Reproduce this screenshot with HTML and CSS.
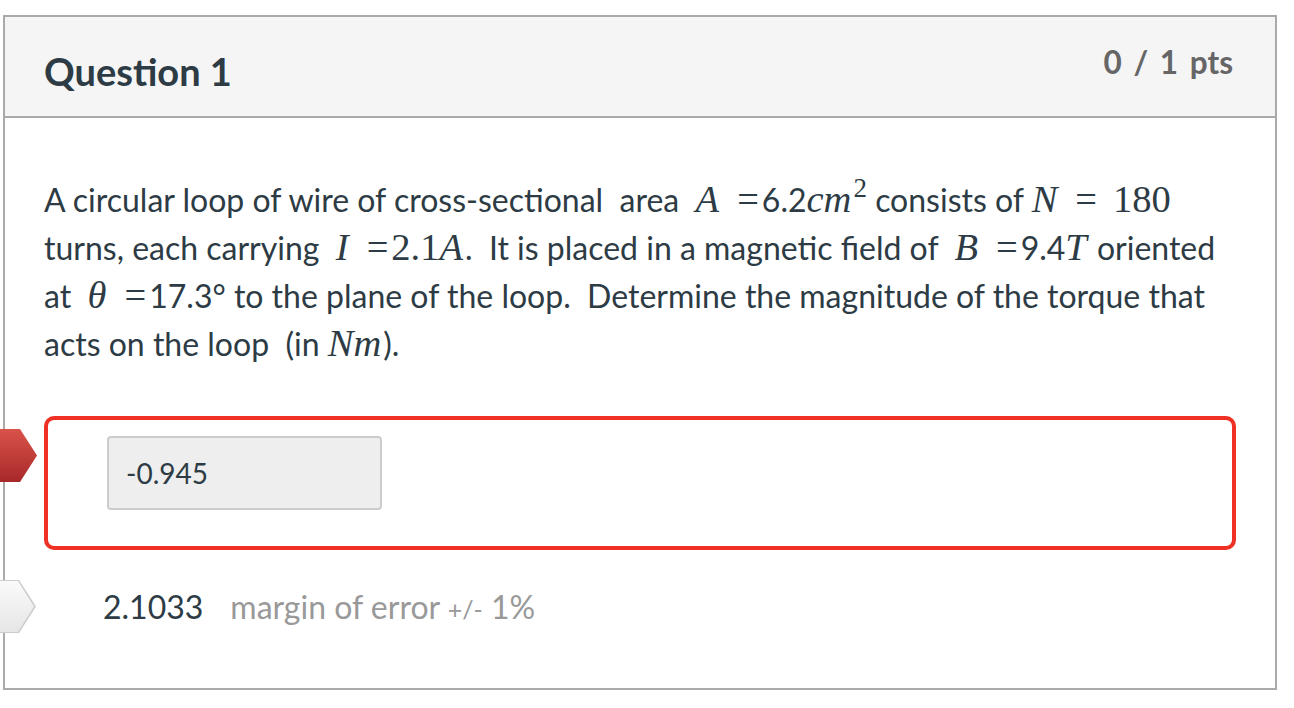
FILE: index.html
```html
<!DOCTYPE html>
<html>
<head>
<meta charset="utf-8">
<link rel="stylesheet" href="styles.css">
</head>
<body>
<div class="question">
  <div class="q-header">
    <h2 class="q-title">Question 1</h2>
    <div class="q-pts">0 / 1 pts</div>
  </div>
  <div class="q-body">
    <p class="q-text">A circular loop of wire of cross-sectional&nbsp; area&nbsp; <span class="mi">A</span><span class="mo">=</span>6.2<span class="mi">cm</span><sup class="sup">2</sup> consists of <span class="mi">N</span><span class="mo both">=</span><span class="mn">180</span> turns, each carrying&nbsp; <span class="mi">I</span><span class="mo">=</span><span class="mn">2.1</span><span class="mi">A</span>.&nbsp; It is placed in a magnetic field of&nbsp; <span class="mi">B</span><span class="mo">=</span>9.4<span class="mi">T</span> oriented at&nbsp; <span class="mi">θ</span><span class="mo">=</span>17.3° to the plane of the loop.&nbsp; Determine the magnitude of the torque that acts on the loop&nbsp; (in <span class="mi">Nm</span>).</p>
    <div class="answers">
      <div class="answer wrong">
        <span class="marker marker-red"></span>
        <div class="answer-box">
          <div class="answer-input">-0.945</div>
        </div>
      </div>
      <div class="answer correct">
        <span class="marker marker-gray"></span>
        <div class="correct-line"><span class="correct-val">2.1033</span><span class="margin">margin of error <span class="pm">+/-</span> 1%</span></div>
      </div>
    </div>
  </div>
</div>
</body>
</html>
```
FILE: styles.css
```css
html, body {
  margin: 0;
  padding: 0;
  background: #ffffff;
}
body {
  font-family: Lato, "Open Sans", sans-serif;
  color: #2d3b45;
  padding: 15px 0 0 3px;
  width: 1274px;
}
.question {
  border: 2px solid #aaaaaa;
  height: 675px;
  box-sizing: border-box;
  position: relative;
}
.q-header {
  background: #f5f5f5;
  border-bottom: 2px solid #aaaaaa;
  height: 101px;
  box-sizing: border-box;
  display: flex;
  justify-content: space-between;
  padding: 0 42px 0 39px;
}
.q-title {
  margin: 0;
  font-weight: 700;
  font-size: 38px;
  line-height: 38px;
  padding-top: 35px;
  color: #2d3b45;
}
.q-pts {
  font-weight: 700;
  font-size: 31.5px;
  line-height: 30px;
  padding-top: 30px;
  color: #666666;
  word-spacing: 4px;
}
.q-body {
  padding: 58px 39px 0 39px;
}
.q-text {
  margin: 0;
  font-size: 32px;
  line-height: 48px;
}
.mi {
  font-family: "Liberation Serif", "DejaVu Serif", serif;
  font-style: italic;
  font-size: 38.5px;
  line-height: 1;
  padding-right: 2px;
}
.mo, .mn {
  font-family: "Liberation Serif", "DejaVu Serif", serif;
  font-size: 38.5px;
  line-height: 1;
}
.mo {
  margin: 0 3px 0 16px;
}
.mo.both {
  margin-right: 16px;
}
.sup {
  font-family: "Liberation Serif", serif;
  font-size: 27px;
  line-height: 0;
  vertical-align: 15px;
}
.answers {
  padding-top: 48px;
}
.answer {
  position: relative;
}
.answer-box {
  border: 4px solid #ee3124;
  border-radius: 10px;
  height: 134px;
  box-sizing: border-box;
  padding: 16px 59px;
}
.answer-input {
  width: 275px;
  height: 74px;
  box-sizing: border-box;
  background: #eeeeee;
  border: 2px solid #cccccc;
  border-radius: 4px;
  font-size: 28px;
  line-height: 70px;
  padding-left: 17px;
  color: #2d3b45;
}
.correct-line {
  padding: 37px 0 0 59px;
  font-size: 32px;
  line-height: 40px;
}
.correct-val {
  color: #2d3b45;
}
.margin {
  color: #999999;
  margin-left: 27px;
}
.pm {
  font-size: 25px;
}
.marker {
  position: absolute;
  left: -44px;
  width: 40px;
  height: 53px;
}
.marker-red {
  top: 13px;
  background: linear-gradient(#d9534a, #a8282a);
  clip-path: polygon(0 0, 20px 0, 37px 50%, 20px 100%, 0 100%);
}
.marker-gray {
  top: 30px;
  background: #cccccc;
  clip-path: polygon(0 0, 19px 0, 36px 50%, 19px 100%, 0 100%);
}
.marker-gray::after {
  content: "";
  position: absolute;
  inset: 1px 2px 1px 0;
  background: linear-gradient(#fafafa, #e6e6e6);
  clip-path: polygon(0 0, 18px 0, 34px 50%, 18px 100%, 0 100%);
}
```
